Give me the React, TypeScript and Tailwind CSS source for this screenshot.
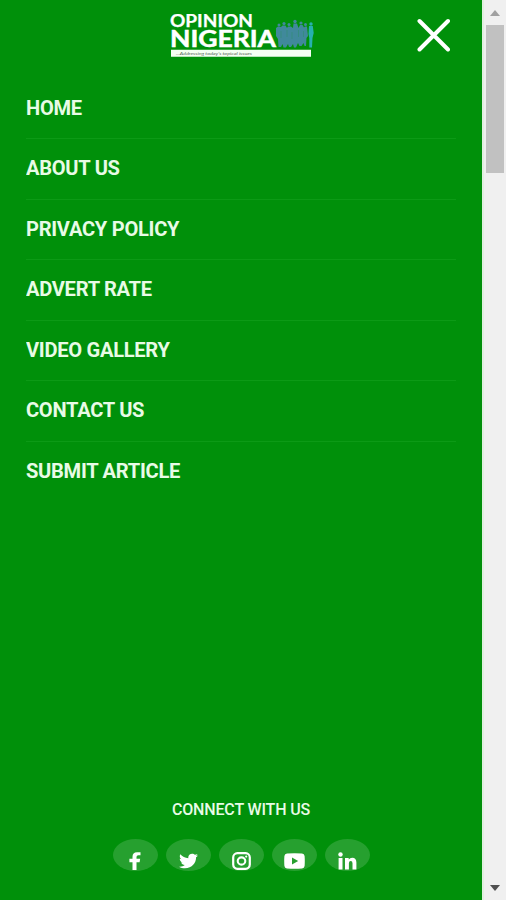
import React, { ReactNode } from "react";
import { FaTwitter } from "react-icons/fa";

const menuItems = [
  "HOME",
  "ABOUT US",
  "PRIVACY POLICY",
  "ADVERT RATE",
  "VIDEO GALLERY",
  "CONTACT US",
  "SUBMIT ARTICLE",
];

function FacebookIcon() {
  return (
    <svg viewBox="0 0 12 18" className="h-[18px] w-3" aria-hidden="true">
      <path fill="currentColor" d="M3.500 18V10.200H.4V6.800H3.500V4.800Q3.500.3 8 .3H11.500V3.300H9.300Q7.500 3.300 7.500 4.900V6.800H11.200L10.600 10.200H7.500V18Z" />
    </svg>
  );
}

function InstagramIcon() {
  return (
    <svg viewBox="0 0 19 18" className="h-[18px] w-[19px]" fill="none" stroke="currentColor" aria-hidden="true">
      <rect x="1.200" y="1.200" width="16.600" height="15.600" rx="4.200" strokeWidth="2.200" />
      <ellipse cx="9.500" cy="9" rx="3.800" ry="3.600" strokeWidth="2.100" />
      <circle cx="14.200" cy="4.600" r="1.100" fill="currentColor" stroke="none" />
    </svg>
  );
}

function YoutubeIcon() {
  return (
    <svg viewBox="0 0 21 16" className="h-4 w-[21px]" aria-hidden="true">
      <path
        fill="currentColor"
        fillRule="evenodd"
        d="M3 .6Q10.500 -.2 18 .6Q20.300.8 20.600 3Q21 8 20.600 13Q20.300 15.200 18 15.400Q10.500 16.200 3 15.400Q.7 15.200.4 13Q0 8 .4 3Q.7.8 3 .6ZM8 4.600V11.400L14.200 8Z"
      />
    </svg>
  );
}

function LinkedinIcon() {
  return (
    <svg viewBox="0 0 19 18" className="h-[18px] w-[19px]" fill="currentColor" aria-hidden="true">
      <circle cx="2.500" cy="2.500" r="2.200" />
      <path d="M.6 6H4.500V17.500H.6ZM7 6H10.700V7.500Q12 5.700 14.200 5.700Q18.400 5.700 18.400 10.500V17.500H14.500V11.300Q14.500 9 12.700 9Q10.900 9 10.900 11.300V17.500H7Z" />
    </svg>
  );
}

const socials: { name: string; icon: ReactNode }[] = [
  { name: "Facebook", icon: <FacebookIcon /> },
  { name: "Twitter", icon: <FaTwitter className="h-[18px] w-[19px]" preserveAspectRatio="none" /> },
  { name: "Instagram", icon: <InstagramIcon /> },
  { name: "Youtube", icon: <YoutubeIcon /> },
  { name: "LinkedIn", icon: <LinkedinIcon /> },
];

function Logo() {
  return (
    <svg viewBox="0 0 146 50" className="h-[50px] w-[146px]" role="img" aria-label="Opinion Nigeria">
      <g fill="#fff" stroke="#fff" fontFamily="Lato, 'Open Sans', sans-serif" fontWeight="700">
        <text x="1" y="16.500" fontSize="16.500" strokeWidth=".25" textLength="83" lengthAdjust="spacingAndGlyphs">OPINION</text>
        <text x="1" y="37" fontSize="22" strokeWidth=".5" textLength="106" lengthAdjust="spacingAndGlyphs">NIGERIA</text>
      </g>
      {/* crowd silhouette */}
      <g fill="#40899b">
        <circle cx="110" cy="15" r="1.500" />
        <circle cx="115" cy="13.500" r="1.600" />
        <circle cx="120" cy="14.500" r="1.500" />
        <circle cx="126" cy="11.500" r="1.700" />
        <circle cx="132" cy="13" r="1.600" />
        <circle cx="136.500" cy="14.500" r="1.500" />
        <path d="M107 18L109 16.500L112 17L113.500 15.500H116.500L118 18L119 16.500H122L124 18L124.500 13.500H128L129.500 18L131 15H133.500L135 17.500L136 16.500H138L139 26L137.500 28L137 36H135.500L134.500 33L132.500 36H130.500L129 33L127 37.500H125L124 34L122 37H120L119 34L117 37.500H114.500L113.500 34L112 37H109.500L109 29L107 26Z" />
        <path d="M112 21V28M118 20V27M123 22V29M129.500 20V27M134.500 21V27" stroke="#2d8c69" strokeWidth=".5" />
      </g>
      <g fill="#27b0ae">
        <circle cx="142" cy="14" r="1.700" />
        <path d="M140 16H143.800L144.700 23L143.500 28L143 37.500H140.300V28L139.500 24Z" />
      </g>
      <path fill="#f5fff3" d="M2 39.800H142V46.800H2Z" />
      <text x="7" y="44.800" fontSize="4.200" fill="#526052" fontFamily="Lato, sans-serif" fontStyle="italic" textLength="76" lengthAdjust="spacingAndGlyphs">
        ...Addressing today's topical issues
      </text>
    </svg>
  );
}

function Scrollbar() {
  return (
    <div className="flex w-6 shrink-0 flex-col items-center border-l-2 border-[#e1f0df] bg-[#f0f0f0]">
      <div className="flex h-[25px] items-center pt-px">
        <svg viewBox="0 0 10 6" className="h-1.5 w-2.5"><path d="M0 6L5 0L10 6Z" fill="#a0a0a0" /></svg>
      </div>
      <div className="h-[148px] w-[18px] bg-[#c1c1c1]" />
      <div className="mt-auto flex h-[25px] items-center">
        <svg viewBox="0 0 10 6" className="h-1.5 w-2.5"><path d="M0 0L5 6L10 0Z" fill="#505050" /></svg>
      </div>
    </div>
  );
}

export default function App() {
  return (
    <div className="flex h-[900px] w-[506px] overflow-hidden bg-[#00900a] font-['Roboto',sans-serif] text-white">
      <main className="flex w-[482px] shrink-0 flex-col">
        <header className="flex h-[78.500px] items-start justify-between pl-[169px] pr-8 pt-[10px]">
          <Logo />
          <button aria-label="Close menu" className="mt-2">
            <svg viewBox="0 0 34 34" className="h-[34px] w-[34px]">
              <path d="M3.500 3L32 31.500M32 3L3.500 31.500" stroke="#fff" strokeWidth="4" strokeLinecap="round" />
            </svg>
          </button>
        </header>
        <nav className="px-[26px]">
          <ul>
            {menuItems.map((label) => (
              <li key={label} className="h-[60.500px] border-b border-[#0c9a16] last:border-0">
                <a className="flex h-[59.500px] origin-left scale-x-[1.03] items-center text-[19.500px] font-bold leading-none tracking-[-0.27px] text-[#e8fbe6]">{label}</a>
              </li>
            ))}
          </ul>
        </nav>
        <footer className="mt-auto flex flex-col items-center pb-[29px]">
          <h2 className="text-base font-medium leading-[20px] tracking-[-0.15px] text-[#e8fbe6]">CONNECT WITH US</h2>
          <div className="mt-[19px] flex gap-2">
            {socials.map(({ name, icon }) => (
              <a key={name} aria-label={name} className="flex h-8 w-[45px] items-center justify-center rounded-[50%] bg-[#26a02f] pt-3">
                {icon}
              </a>
            ))}
          </div>
        </footer>
      </main>
      <Scrollbar />
    </div>
  );
}
